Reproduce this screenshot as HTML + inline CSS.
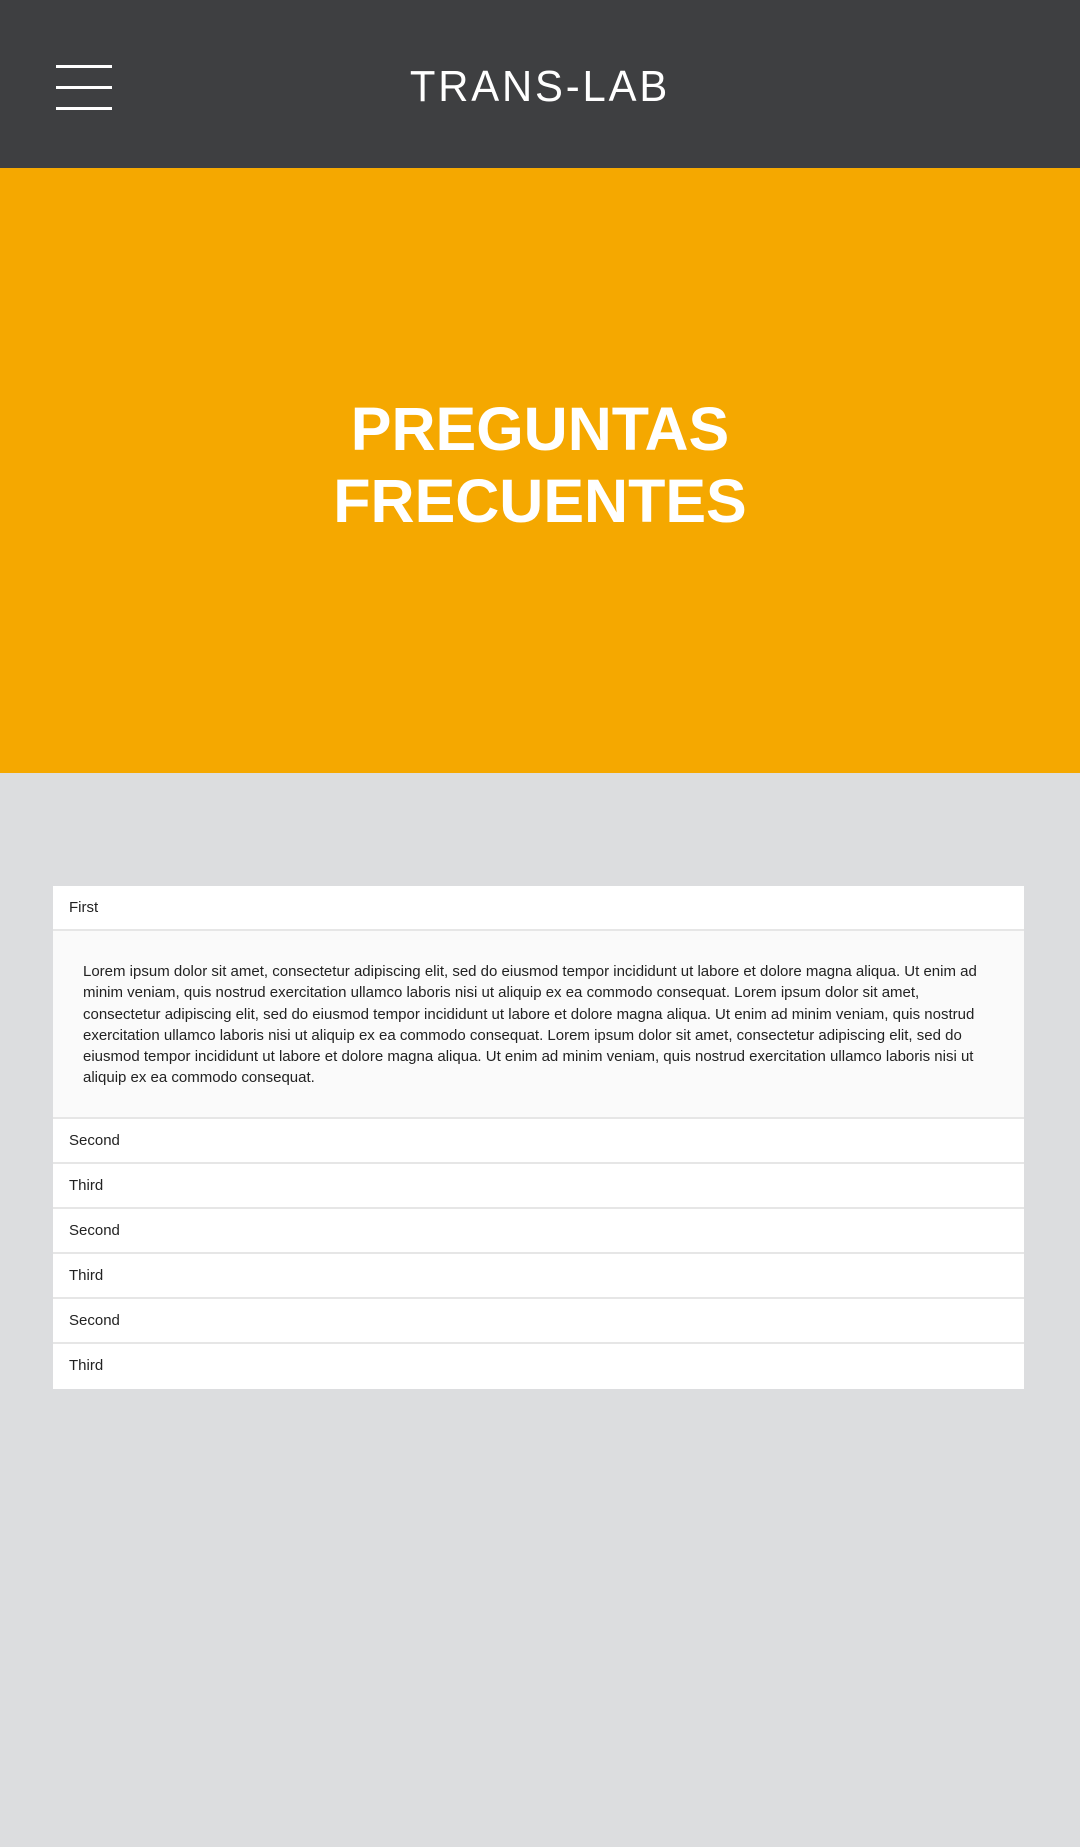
<!DOCTYPE html>
<html><head><meta charset="utf-8"><style>
*{margin:0;padding:0;box-sizing:border-box}
body{width:1080px;height:1847px;background:#dcdddf;font-family:"Liberation Sans",sans-serif;overflow:hidden;position:relative}
.hdr{position:absolute;left:0;top:0;width:1080px;height:168px;background:#3e3f41}
.bar{position:absolute;left:56px;width:56px;height:3px;background:#fff}
.logo{position:absolute;left:0;width:1080px;top:62px;text-align:center;color:#fff;font-size:44px;letter-spacing:3px;font-weight:normal;line-height:50px;transform:scaleX(0.95)}
.hero{position:absolute;left:0;top:168px;width:1080px;height:605px;background:#f5a800}
.title{position:absolute;left:0;width:1080px;top:393px;text-align:center;color:#fff;font-weight:bold;font-size:61px;line-height:72px}
.acc{position:absolute;left:53px;top:886px;width:971px;background:#fff}
.row{height:45px;border-bottom:2px solid #e6e6e6;padding-left:16px;font-size:15px;color:#222;line-height:43px}
.row:last-child{border-bottom:none}
.panel{background:#fafafa;border-bottom:2px solid #e6e6e6;height:188px;padding:30px 30px 0 30px;font-size:15px;line-height:21.3px;color:#222}
</style></head><body>
<div class="hdr">
<div class="bar" style="top:65px"></div>
<div class="bar" style="top:86px"></div>
<div class="bar" style="top:107px"></div>
<div class="logo">TRANS-LAB</div>
</div>
<div class="hero"></div>
<div class="title">PREGUNTAS<br>FRECUENTES</div>
<div class="acc">
<div class="row">First</div>
<div class="panel">Lorem ipsum dolor sit amet, consectetur adipiscing elit, sed do eiusmod tempor incididunt ut labore et dolore magna aliqua. Ut enim ad minim veniam, quis nostrud exercitation ullamco laboris nisi ut aliquip ex ea commodo consequat. Lorem ipsum dolor sit amet, consectetur adipiscing elit, sed do eiusmod tempor incididunt ut labore et dolore magna aliqua. Ut enim ad minim veniam, quis nostrud exercitation ullamco laboris nisi ut aliquip ex ea commodo consequat. Lorem ipsum dolor sit amet, consectetur adipiscing elit, sed do eiusmod tempor incididunt ut labore et dolore magna aliqua. Ut enim ad minim veniam, quis nostrud exercitation ullamco laboris nisi ut aliquip ex ea commodo consequat.</div>
<div class="row">Second</div>
<div class="row">Third</div>
<div class="row">Second</div>
<div class="row">Third</div>
<div class="row">Second</div>
<div class="row">Third</div>
</div>
</body></html>
